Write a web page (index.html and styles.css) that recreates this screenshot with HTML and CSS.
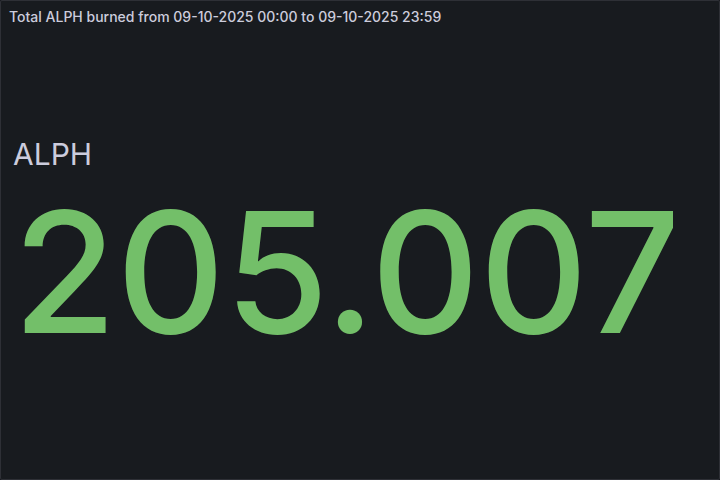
FILE: index.html
```html
<!DOCTYPE html>
<html>
<head>
<meta charset="utf-8">
<link rel="stylesheet" href="styles.css">
</head>
<body>
<div class="panel">
  <div class="panel-header">
    <h2 class="panel-title">Total ALPH burned from 09-10-2025 00:00 to 09-10-2025 23:59</h2>
  </div>
  <div class="panel-body">
    <div class="stat">
      <div class="stat-name">ALPH</div>
      <div class="stat-value">205.007</div>
    </div>
  </div>
</div>
</body>
</html>
```
FILE: styles.css
```css
html, body {
  margin: 0;
  padding: 0;
  background: #111217;
}
.panel {
  box-sizing: border-box;
  width: 720px;
  height: 480px;
  background: #181b1f;
  border: 1px solid rgba(204, 204, 220, 0.12);
  border-radius: 2px;
  display: flex;
  flex-direction: column;
  font-family: Inter, "Noto Sans", sans-serif;
  color: #ccccdc;
}
.panel-header {
  height: 32px;
  display: flex;
  align-items: center;
  padding: 0 8px;
}
.panel-title {
  margin: 0;
  font-size: 14px;
  font-weight: 500;
  line-height: 1;
  color: #ccccdc;
  white-space: nowrap;
}
.panel-body {
  flex: 1;
  display: flex;
  align-items: center;
  padding: 6px 8px 8px;
}
.stat {
  display: flex;
  flex-direction: column;
  padding-left: 4px;
}
.stat-name {
  font-size: 30px;
  line-height: 1.2;
  font-weight: 400;
  color: #ccccdc;
}
.stat-value {
  font-size: 168px;
  line-height: 1.2;
  font-weight: 500;
  color: #73bf69;
}
```
